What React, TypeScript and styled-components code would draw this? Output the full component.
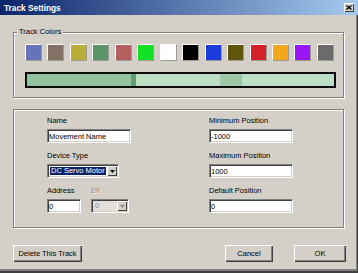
import React from 'react'
import styled, { createGlobalStyle } from 'styled-components'

const GlobalStyle = createGlobalStyle`
  html, body {
    margin: 0;
    padding: 0;
    background: #d4d0c8;
  }
  body {
    font-family: 'Liberation Sans', Arial, sans-serif;
  }
`

const swatches = [
  '#6574b8',
  '#847166',
  '#b8ad36',
  '#5b9469',
  '#b45f60',
  '#12e022',
  '#ffffff',
  '#000000',
  '#1b3bdb',
  '#5f560b',
  '#d22128',
  '#f5a71b',
  '#9a14f5',
  '#6b6b6b',
]

const segments = [
  { width: 104, color: '#93c2a0' },
  { width: 5, color: '#5f9c74' },
  { width: 84, color: '#bedfc4' },
  { width: 22, color: '#9dc8a8' },
  { width: 0, color: '#bedfc4' },
]

const Window = styled.div`
  width: 358px;
  height: 273px;
  display: flex;
  flex-direction: column;
  background: #d4d0c8;
  overflow: hidden;
`

const TitleBar = styled.div`
  flex: none;
  height: 15px;
  display: flex;
  align-items: center;
  justify-content: space-between;
  padding: 0 4px;
  background: linear-gradient(to right, #0a246a, #a6caf0);
`

const TitleText = styled.div`
  color: #fff;
  font-size: 8.3px;
  font-weight: bold;
  line-height: 15px;
  padding-top: 1px;
`

const CloseButton = styled.div`
  width: 10px;
  height: 9px;
  box-sizing: border-box;
  display: flex;
  align-items: center;
  justify-content: center;
  background: #d4d0c8;
  box-shadow: inset 1px 1px 0 #fff, inset -1px -1px 0 #404040;
`

const Body = styled.div`
  flex: 1;
  display: flex;
  flex-direction: column;
  padding: 17px 13px 0 13px;
  border-right: 1px solid #404040;
  border-bottom: 2px solid #404040;
  box-shadow: inset -1px -2px 0 #808080;
`

const GroupBox = styled.div<{ $pad: string; $gap?: number }>`
  position: relative;
  border: 1px solid #808080;
  box-shadow: inset 1px 1px 0 #fff, 1px 1px 0 #fff;
  padding: ${(p) => p.$pad};
  margin-bottom: ${(p) => p.$gap ?? 0}px;
`

const Legend = styled.span`
  position: absolute;
  top: -6px;
  left: 3px;
  padding: 0 2px;
  background: #d4d0c8;
  font-size: 7.5px;
  line-height: 9px;
  color: #000;
`

const SwatchRow = styled.div`
  display: flex;
  justify-content: space-between;
  margin-right: 2px;
`

const Swatch = styled.div<{ $color: string }>`
  width: 17px;
  height: 17px;
  box-sizing: border-box;
  background: ${(p) => p.$color};
  border: 1px solid;
  border-color: #fafaf8 #9c9a94 #9c9a94 #fafaf8;
`

const TrackBar = styled.div`
  margin-top: 11px;
  height: 16px;
  box-sizing: border-box;
  border: 2px solid #0c0c0c;
  display: flex;
`

const Segment = styled.div<{ $color: string; $width: number }>`
  background: ${(p) => p.$color};
  width: ${(p) => (p.$width ? `${p.$width}px` : 'auto')};
  flex: ${(p) => (p.$width ? 'none' : '1')};
`

const FieldGrid = styled.div`
  display: grid;
  grid-template-columns: 162px 84px;
  row-gap: 8px;
`

const Field = styled.div`
  display: flex;
  flex-direction: column;
  gap: 4px;
`

const FieldPair = styled.div`
  display: flex;
  gap: 10px;
`

const Label = styled.label<{ $disabled?: boolean }>`
  font-size: 7.5px;
  line-height: 9px;
  height: 9px;
  color: ${(p) => (p.$disabled ? '#8a8882' : '#000')};
  text-shadow: ${(p) => (p.$disabled ? '1px 1px 0 #fff' : 'none')};
  white-space: nowrap;
`

const TextBox = styled.input<{ $w: number }>`
  width: ${(p) => p.$w}px;
  height: 14px;
  box-sizing: border-box;
  margin: 0;
  padding: 0 1px;
  font-family: 'Liberation Sans', Arial, sans-serif;
  font-size: 7.5px;
  color: #000;
  background: #fff;
  border: 1px solid;
  border-color: #808080 #fff #fff #808080;
  box-shadow: inset 1px 1px 0 #404040, inset -1px -1px 0 #d4d0c8;
  outline: none;
`

const ComboBox = styled.div<{ $w: number; $disabled?: boolean }>`
  width: ${(p) => p.$w}px;
  height: 14px;
  box-sizing: border-box;
  display: flex;
  padding: 2px;
  background: ${(p) => (p.$disabled ? '#e2dfd9' : '#fff')};
  border: 1px solid;
  border-color: #808080 #fff #fff #808080;
  box-shadow: inset 1px 1px 0 #404040, inset -1px -1px 0 #d4d0c8;
`

const ComboValue = styled.div<{ $selected?: boolean; $disabled?: boolean }>`
  flex: 1;
  overflow: hidden;
  white-space: nowrap;
  font-size: 7.5px;
  line-height: 8px;
  padding-left: 1px;
  margin-right: 1px;
  background: ${(p) => (p.$selected ? '#0a246a' : 'transparent')};
  color: ${(p) => (p.$selected ? '#fff' : p.$disabled ? '#8a8882' : '#000')};
`

const DropButton = styled.div`
  width: 10px;
  flex: none;
  margin: -1px -1px -1px 0;
  display: flex;
  align-items: center;
  justify-content: center;
  background: #d4d0c8;
  box-shadow: inset 1px 1px 0 #fff, inset -1px -1px 0 #404040;
`

const ButtonRow = styled.div`
  display: flex;
  margin-top: 17px;
  margin-right: -2px;
`

const Spacer = styled.div`
  flex: 1;
`

const Button = styled.button<{ $w: number; $gap?: number }>`
  width: ${(p) => p.$w}px;
  height: 17px;
  margin: 0 ${(p) => p.$gap ?? 0}px 0 0;
  padding: 0;
  border: none;
  background: #d4d0c8;
  box-shadow: inset 1px 1px 0 #fff, inset -1px -1px 0 #404040, inset -2px -2px 0 #808080;
  font-family: 'Liberation Sans', Arial, sans-serif;
  font-size: 7.5px;
  color: #000;
`

function Arrow({ disabled }: { disabled?: boolean }) {
  return (
    <svg width="5" height="3" viewBox="0 0 5 3">
      <path d="M0 0h5L2.5 3z" fill={disabled ? '#8a8882' : '#000'} />
    </svg>
  )
}

export default function App() {
  return (
    <>
      <GlobalStyle />
      <Window>
        <TitleBar>
          <TitleText>Track Settings</TitleText>
          <CloseButton>
            <svg width="6" height="5" viewBox="0 0 6 5">
              <path d="M0.5 0.5L5.5 4.5M5.5 0.5L0.5 4.5" stroke="#000" strokeWidth="1.3" />
            </svg>
          </CloseButton>
        </TitleBar>
        <Body>
          <GroupBox $pad="11px 7px 9px 11px" $gap={11}>
            <Legend>Track Colors</Legend>
            <SwatchRow>
              {swatches.map((c) => (
                <Swatch key={c} $color={c} />
              ))}
            </SwatchRow>
            <TrackBar>
              {segments.map((s, i) => (
                <Segment key={i} $color={s.color} $width={s.width} />
              ))}
            </TrackBar>
          </GroupBox>

          <GroupBox $pad="6px 0 14px 33px">
            <FieldGrid>
              <Field>
                <Label>Name</Label>
                <TextBox $w={84} defaultValue="Movement Name" />
              </Field>
              <Field>
                <Label>Minimum Position</Label>
                <TextBox $w={84} defaultValue="-1000" />
              </Field>
              <Field>
                <Label>Device Type</Label>
                <ComboBox $w={72}>
                  <ComboValue $selected>DC Servo Motor</ComboValue>
                  <DropButton>
                    <Arrow />
                  </DropButton>
                </ComboBox>
              </Field>
              <Field>
                <Label>Maximum Position</Label>
                <TextBox $w={84} defaultValue="1000" />
              </Field>
              <FieldPair>
                <Field>
                  <Label>Address</Label>
                  <TextBox $w={34} defaultValue="0" />
                </Field>
                <Field>
                  <Label $disabled>Bit</Label>
                  <ComboBox $w={38} $disabled>
                    <ComboValue $disabled>0</ComboValue>
                    <DropButton>
                      <Arrow disabled />
                    </DropButton>
                  </ComboBox>
                </Field>
              </FieldPair>
              <Field>
                <Label>Default Position</Label>
                <TextBox $w={84} defaultValue="0" />
              </Field>
            </FieldGrid>
          </GroupBox>

          <ButtonRow>
            <Button $w={69}>Delete This Track</Button>
            <Spacer />
            <Button $w={48} $gap={21}>
              Cancel
            </Button>
            <Button $w={52}>OK</Button>
          </ButtonRow>
        </Body>
      </Window>
    </>
  )
}
